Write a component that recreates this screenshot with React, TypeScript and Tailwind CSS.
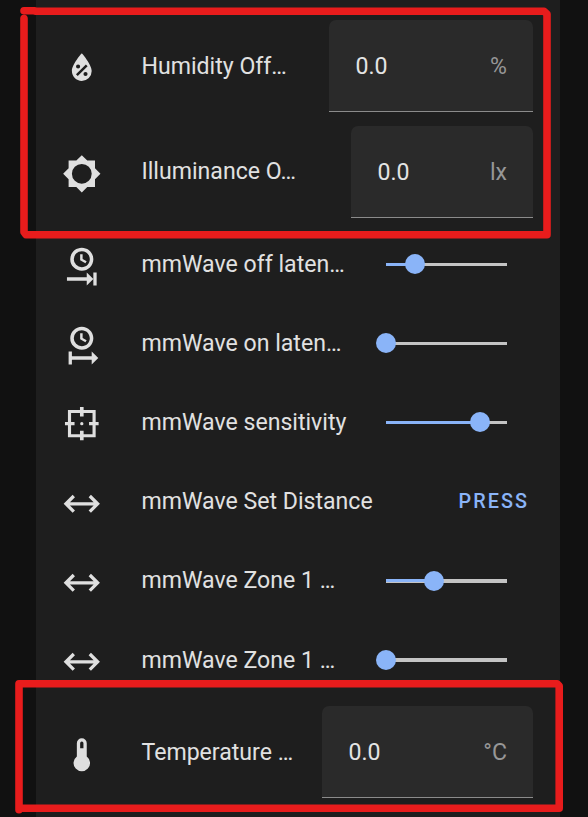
import type { ReactNode } from "react";

const ICONS = {
  humidity:
    "M12,3.25C12,3.25 6,10 6,14C6,17.32 8.69,20 12,20A6,6 0 0,0 18,14C18,10 12,3.25 12,3.25M14.47,9.97L15.53,11.03L9.53,17.03L8.47,15.97M9.75,10A1.25,1.25 0 0,1 11,11.25A1.25,1.25 0 0,1 9.75,12.5A1.25,1.25 0 0,1 8.5,11.25A1.25,1.25 0 0,1 9.75,10M14.25,14.5A1.25,1.25 0 0,1 15.5,15.75A1.25,1.25 0 0,1 14.25,17A1.25,1.25 0 0,1 13,15.75A1.25,1.25 0 0,1 14.25,14.5Z",
  brightness:
    "M12,18A6,6 0 0,1 6,12A6,6 0 0,1 12,6A6,6 0 0,1 18,12A6,6 0 0,1 12,18M20,15.31L23.31,12L20,8.69V4H15.31L12,0.69L8.69,4H4V8.69L0.69,12L4,15.31V20H8.69L12,23.31L15.31,20H20V15.31Z",
  clockEnd:
    "M12 1C8.14 1 5 4.14 5 8A7 7 0 0 0 12 15C15.86 15 19 11.87 19 8C19 4.14 15.86 1 12 1M12 3.15C14.67 3.15 16.85 5.32 16.85 8S14.67 12.85 12 12.85A4.85 4.85 0 0 1 7.15 8A4.85 4.85 0 0 1 12 3.15M11 5V8.69L14.19 10.53L14.94 9.23L12.5 7.82V5M15 16V19H3V21H15V24L19 20V24H21V16H19V20L15 16Z",
  clockStart:
    "M12 1C8.14 1 5 4.14 5 8A7 7 0 0 0 12 15C15.86 15 19 11.87 19 8C19 4.14 15.86 1 12 1M12 3.15C14.67 3.15 16.85 5.32 16.85 8S14.67 12.85 12 12.85A4.85 4.85 0 0 1 7.15 8A4.85 4.85 0 0 1 12 3.15M11 5V8.69L14.19 10.53L14.94 9.23L12.5 7.82V5M4 16V24H6V21H18V24L22 20L18 16V19H6V16H4Z",
  target:
    "M10.9 1.8V3.6H3.6V10.9H1.8V12.9H3.6V20.2H10.9V22H13.1V20.2H20.4V12.9H22.2V10.9H20.4V3.6H13.1V1.8H10.9M5.5 5.5H10.9V7.6H13.1V5.5H18.5V10.9H16.4V12.9H18.5V18.3H13.1V16.2H10.9V18.3H5.5V12.9H7.6V10.9H5.5V5.5M12 10.9A1 1 0 0 0 11 11.9A1 1 0 0 0 12 12.9A1 1 0 0 0 13 11.9A1 1 0 0 0 12 10.9Z",
  horizontal:
    "M6.45,17.45L1,12L6.45,6.55L7.86,7.96L4.83,11H19.17L16.14,7.96L17.55,6.55L23,12L17.55,17.45L16.14,16.04L19.17,13H4.83L7.86,16.04L6.45,17.45Z",
  thermometer:
    "M15 13V5A3 3 0 0 0 9 5V13A5 5 0 1 0 15 13M12 4A1 1 0 0 1 13 5V8H11V5A1 1 0 0 1 12 4Z",
};

function Row({ icon, label, height = "h-[79.2px]", labelClass = "w-[210px]", iconClass = "mt-[2.6px]", children }: {
  icon: keyof typeof ICONS;
  label: string;
  height?: string;
  labelClass?: string;
  iconClass?: string;
  children: ReactNode;
}) {
  return (
    <div className={`flex shrink-0 items-center pl-[26.2px] pr-[27px] ${height}`}>
      <svg viewBox="0 0 24 24" className={`size-[39.6px] shrink-0 ${iconClass}`} fill="#dfdfdf" fillRule="evenodd">
        <path d={ICONS[icon]} />
      </svg>
      <div className={`ml-[39.7px] shrink-0 whitespace-nowrap ${labelClass}`}>{label}</div>
      <div className="ml-auto flex shrink-0 items-center">{children}</div>
    </div>
  );
}

function Field({ unit, width }: { unit: string; width: string }) {
  return (
    <div className={`flex h-[92px] items-center justify-between rounded-t-[7px] border-b border-[#8b8b8b] bg-[#2a2a2a] pt-[2px] pl-[26.5px] pr-[26px] ${width}`}>
      <span className="text-[#e4e4e4]">0.0</span>
      <span className="text-[#979797]">{unit}</span>
    </div>
  );
}

function Slider({ value, track = "h-[3px]" }: { value: number; track?: string }) {
  return (
    <div className="relative -mt-[0.4px] mr-[26px] flex h-5 w-[121px] items-center">
      <div className={`w-full bg-[#c4c4c4] ${track}`}>
        <div className="h-[3px] bg-[#8ab4f8]" style={{ width: value }} />
      </div>
      <div className="absolute -top-[0.4px] size-5 -translate-x-1/2 rounded-full bg-[#8ab4f8]" style={{ left: value }} />
    </div>
  );
}

export default function App() {
  return (
    <div className="relative h-[817px] w-[588px] overflow-hidden bg-[#111111] font-['Roboto',sans-serif] text-[23.1px] leading-8 text-[#e1e1e1]">
      <main className="ml-9 flex h-full w-[524px] flex-col bg-[#1e1e1e] pt-[13px]">
        <Row icon="humidity" label="Humidity Off…" height="h-[106px]" labelClass="w-[180px] pt-[2px]" iconClass="mt-[4px]">
          <Field unit="%" width="w-[204px]" />
        </Row>
        <Row icon="brightness" label="Illuminance O…" height="h-[106px]" labelClass="w-[180px]" iconClass="mt-[3.2px]">
          <Field unit="lx" width="w-[182px]" />
        </Row>
        <Row icon="clockEnd" label="mmWave off laten…">
          <Slider value={29} />
        </Row>
        <Row icon="clockStart" label="mmWave on laten…">
          <Slider value={0.4} />
        </Row>
        <Row icon="target" label="mmWave sensitivity">
          <Slider value={94} />
        </Row>
        <Row icon="horizontal" label="mmWave Set Distance" labelClass="w-[240px]">
          <button className="mr-[4px] text-[19.8px] font-medium tracking-[2.05px] text-[#8ab4f8]">PRESS</button>
        </Row>
        <Row icon="horizontal" label="mmWave Zone 1 …" iconClass="mt-[3.2px]">
          <Slider value={48} track="h-1" />
        </Row>
        <Row icon="horizontal" label="mmWave Zone 1 …" height="h-[78.4px]" labelClass="w-[210px] pt-[1.2px]" iconClass="mt-[4px]">
          <Slider value={0.4} track="h-1" />
        </Row>
        <Row icon="thermometer" label="Temperature …" height="h-[106px]" labelClass="w-[175px] pt-[1.5px]" iconClass="mt-[4.4px]">
          <Field unit="°C" width="w-[211px]" />
        </Row>
      </main>
      {/* Hand-drawn highlight strokes over the offset settings */}
      <svg className="pointer-events-none absolute inset-0" width="588" height="817" fill="none" stroke="#e81c1c" strokeWidth="7.6" strokeLinecap="round" strokeLinejoin="round">
        <path d="M24 10.8H34L36 11.3H544L547 14V234.7H26L24 232V18.5" />
        <path d="M19 809.8V683.8H557L559.2 686V808.2H19" />
      </svg>
    </div>
  );
}
